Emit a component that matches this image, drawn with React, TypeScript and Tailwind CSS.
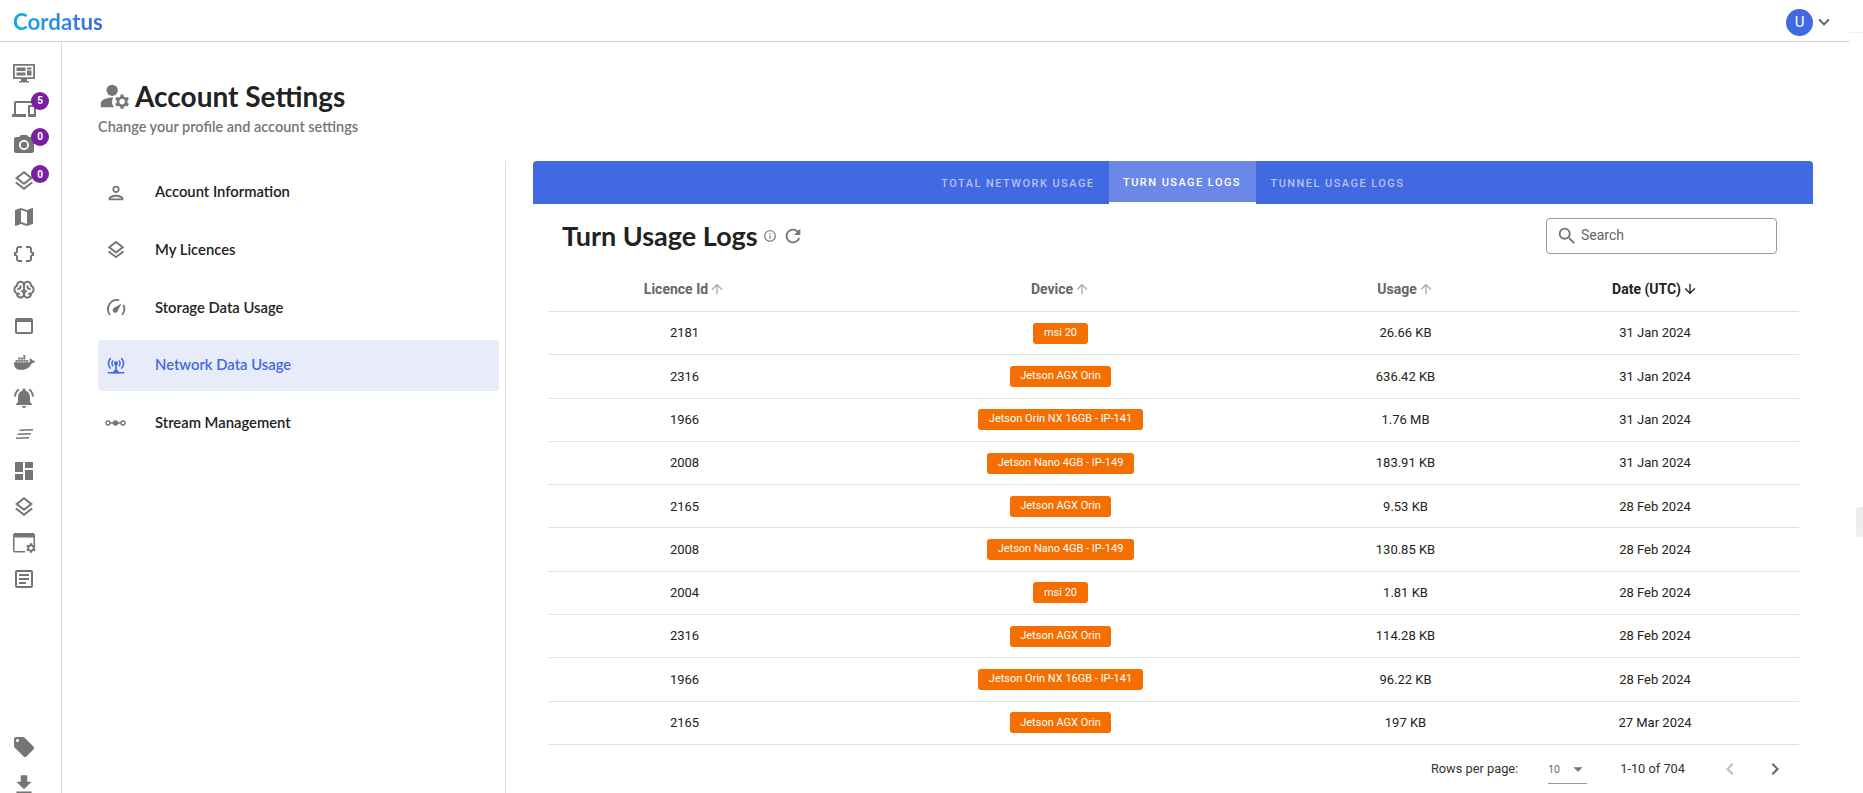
import React from "react";
import {
  MdOutlineDevices, MdPhotoCamera, MdOutlineLayers, MdMap, MdDataObject, MdOutlineWebAsset,
  MdNotificationsActive, MdDashboard, MdOutlineArticle, MdLocalOffer, MdFileDownload, MdManageAccounts,
  MdOutlinePerson, MdArrowUpward, MdArrowDownward, MdSearch, MdInfoOutline, MdRefresh,
  MdArrowDropDown, MdChevronLeft, MdChevronRight, MdExpandMore, MdSettings,
} from "react-icons/md";
import { FaDocker } from "react-icons/fa";
import { PiBrainBold } from "react-icons/pi";

function MonitorIcon() {
  return (
    <svg width="24" height="24" viewBox="0 0 24 24" fill="#757575">
      <path d="M2 3h20a1 1 0 0 1 1 1v13a1 1 0 0 1-1 1h-7v2h2v1.500H7V20h2v-2H2a1 1 0 0 1-1-1V4a1 1 0 0 1 1-1zm.8 1.800v11.400h18.400V4.800H2.800z" />
      <path d="M4.500 6.500h9v3.500h-9zM15 6.500h4.500v2H15zM15 9.500h4.500v5H15zM4.500 11.500h9v3h-9z" />
    </svg>
  );
}

function LinesIcon() {
  return (
    <svg width="24" height="24" viewBox="0 0 24 24" stroke="#757575" strokeWidth="1.6" fill="none">
      <path d="M7.500 8.300L21 7.700M5.500 12.300L19 11.700M4 16.300L17 15.700" />
    </svg>
  );
}

function WindowGearIcon() {
  return (
    <div className="relative w-6 h-6">
      <svg width="24" height="24" viewBox="0 0 24 24" fill="#757575">
        <path d="M3 2h18a2 2 0 0 1 2 2v10h-1.500V6.500h-19V20H13v1.500H3a2 2 0 0 1-2-2V4a2 2 0 0 1 2-2z" />
      </svg>
      <MdSettings size={12} color="#757575" className="absolute right-[-1px] bottom-[1px]" />
    </div>
  );
}

function GaugeIcon() {
  return (
    <svg width="22" height="22" viewBox="0 0 24 24" fill="none" stroke="#757575" strokeWidth="2">
      <path d="M5.500 19.500A10 10 0 0 1 15.500 3.500M20 8.500a10 10 0 0 1-1.500 11" />
      <path d="M9.200 12.300a2.800 2.800 0 0 0 4 4L18 7z" fill="#757575" stroke="none" />
    </svg>
  );
}

function NetworkIcon() {
  return (
    <svg width="20" height="18" viewBox="0 0 24 22" fill="none" stroke="#4169e1" strokeWidth="2">
      <circle cx="12" cy="9" r="1.500" fill="#4169e1" />
      <path d="M8.500 5.500a5 5 0 0 0 0 7M15.500 5.500a5 5 0 0 1 0 7M5.500 2.500a9 9 0 0 0 0 13M18.500 2.500a9 9 0 0 1 0 13M12 10v9M2 20.500h20" />
      <path d="M9 20l3-3 3 3z" fill="#4169e1" />
    </svg>
  );
}

function StreamIcon() {
  return (
    <svg width="21" height="10" viewBox="0 0 21 10" fill="none" stroke="#757575" strokeWidth="1.400">
      <circle cx="3" cy="5" r="2" />
      <circle cx="10.500" cy="5" r="2" fill="#757575" />
      <circle cx="18" cy="5" r="2" />
      <path d="M5 5h3.500M12.500 5H16" />
    </svg>
  );
}

const C = "#757575";

function Badge({ n, top }: { n: string; top: string }) {
  return (
    <span
      className={`absolute left-[31px] ${top} w-[18px] h-[18px] rounded-full bg-[#7b1fa2] text-white text-[10px] font-bold flex items-center justify-center`}
    >
      {n}
    </span>
  );
}

function SideIcon({ children, badge, badgeTop }: { children: React.ReactNode; badge?: string; badgeTop?: string }) {
  return (
    <div className="relative w-[48px] h-[36.2px] flex items-center justify-center">
      {children}
      {badge ? <Badge n={badge} top={badgeTop ?? "top-0"} /> : null}
    </div>
  );
}

function Sidebar() {
  return (
    <aside className="w-[62px] shrink-0 border-r border-[#dcdcdc] pt-[12.500px] overflow-hidden">
      <SideIcon><MonitorIcon /></SideIcon>
      <SideIcon badge="5" badgeTop="top-[1px]"><MdOutlineDevices size={24} color={C} /></SideIcon>
      <SideIcon badge="0" badgeTop="top-[1px]"><MdPhotoCamera size={24} color={C} /></SideIcon>
      <SideIcon badge="0" badgeTop="top-[2px]"><MdOutlineLayers size={24} color={C} /></SideIcon>
      <SideIcon><MdMap size={24} color={C} /></SideIcon>
      <SideIcon><MdDataObject size={24} color={C} /></SideIcon>
      <SideIcon><PiBrainBold size={22} color={C} /></SideIcon>
      <SideIcon><MdOutlineWebAsset size={24} color={C} /></SideIcon>
      <SideIcon><FaDocker size={21} color={C} /></SideIcon>
      <SideIcon><MdNotificationsActive size={24} color={C} /></SideIcon>
      <SideIcon><LinesIcon /></SideIcon>
      <SideIcon><MdDashboard size={24} color={C} /></SideIcon>
      <SideIcon><MdOutlineLayers size={24} color={C} /></SideIcon>
      <SideIcon><WindowGearIcon /></SideIcon>
      <SideIcon><MdOutlineArticle size={24} color={C} /></SideIcon>
      <div className="mt-[130.500px] w-[48px]">
        <div className="h-[38px] flex items-center justify-center"><MdLocalOffer size={24} color={C} /></div>
        <div className="h-[38px] flex items-center justify-center"><MdFileDownload size={26} color={C} /></div>
      </div>
    </aside>
  );
}

const menu: { label: string; icon: React.ReactNode; active?: boolean }[] = [
  { label: "Account Information", icon: <MdOutlinePerson size={22} color={C} /> },
  { label: "My Licences", icon: <MdOutlineLayers size={22} color={C} /> },
  { label: "Storage Data Usage", icon: <GaugeIcon /> },
  { label: "Network Data Usage", icon: <NetworkIcon />, active: true },
  { label: "Stream Management", icon: <StreamIcon /> },
];

function Menu() {
  return (
    <nav className="w-[401px] flex flex-col gap-[6.600px] pt-[6px]">
      {menu.map((m) => (
        <div
          key={m.label}
          className={`h-[51px] flex items-center rounded font-['Lato',sans-serif] font-semibold text-[14.800px] ${
            m.active ? "bg-[#e8ecfa] text-[#4169e1]" : "text-[#222222]"
          }`}
        >
          <div className="w-[35px] mr-[22px] flex justify-center shrink-0">{m.icon}</div>
          <span className="-mt-[2px]">{m.label}</span>
        </div>
      ))}
    </nav>
  );
}

type Row = [string, string, string, string];
const rows: Row[] = [
  ["2181", "msi 20", "26.66 KB", "31 Jan 2024"],
  ["2316", "Jetson AGX Orin", "636.42 KB", "31 Jan 2024"],
  ["1966", "Jetson Orin NX 16GB - IP-141", "1.76 MB", "31 Jan 2024"],
  ["2008", "Jetson Nano 4GB - IP-149", "183.91 KB", "31 Jan 2024"],
  ["2165", "Jetson AGX Orin", "9.53 KB", "28 Feb 2024"],
  ["2008", "Jetson Nano 4GB - IP-149", "130.85 KB", "28 Feb 2024"],
  ["2004", "msi 20", "1.81 KB", "28 Feb 2024"],
  ["2316", "Jetson AGX Orin", "114.28 KB", "28 Feb 2024"],
  ["1966", "Jetson Orin NX 16GB - IP-141", "96.22 KB", "28 Feb 2024"],
  ["2165", "Jetson AGX Orin", "197 KB", "27 Mar 2024"],
];

const grid = "grid grid-cols-[273px_479px_211px_288px]";

function Head({ label, active }: { label: string; active?: boolean }) {
  return (
    <div className={`flex items-center justify-center font-bold text-[14px] ${active ? "text-[#222222]" : "text-[#666666]"}`}>
      {label}
      {active ? (
        <MdArrowDownward size={16} color="#222222" className="ml-[1px]" />
      ) : (
        <MdArrowUpward size={16} color="#aaaaaa" className="ml-[1px]" />
      )}
    </div>
  );
}

function Table() {
  return (
    <div className="mx-[15px] w-[1251px]">
      <div className={`${grid} h-[45px] border-b border-[#e0e0e0]`}>
        <Head label="Licence Id" />
        <Head label="Device" />
        <Head label="Usage" />
        <Head label="Date (UTC)" active />
      </div>
      {rows.map((r, i) => (
        <div key={i} className={`${grid} h-[43.300px] border-b border-[#e0e0e0] text-[13px] text-[#222222] items-center text-center`}>
          <div>{r[0]}</div>
          <div className="flex justify-center">
            <span className="h-[21px] px-[10.500px] rounded-[3px] bg-[#f46e00] text-white text-[11px] flex items-center">{r[1]}</span>
          </div>
          <div>{r[2]}</div>
          <div>{r[3]}</div>
        </div>
      ))}
      <div className="h-[48px] flex items-center justify-end text-[12.800px] text-[#333333]">
        <span>Rows per page:</span>
        <div className="relative ml-[30px] w-[39px] h-[31px] border-b border-[#999999] flex items-center text-[10.500px] text-[#666666] pt-[3px]">
          10
          <MdArrowDropDown size={22} color="#757575" className="absolute left-[19px] top-[5px]" />
        </div>
        <span className="ml-[33px]">1-10 of 704</span>
        <MdChevronLeft size={24} color="#bdbdbd" className="ml-[33px]" />
        <MdChevronRight size={24} color="#666666" className="ml-[21px] mr-[12px]" />
      </div>
    </div>
  );
}

function Tabs() {
  return (
    <div className="h-[43px] bg-[#4169e1] rounded-t flex justify-center pr-[2px] text-[11px] font-medium tracking-[1.450px]">
      <div className="w-[182px] pt-[3px] flex items-center justify-end pr-[14px] text-white/60">TOTAL NETWORK USAGE</div>
      <div className="w-[147px] h-full pt-[3px] flex items-center justify-center bg-[#6c88e7] border-b-2 border-white text-white">TURN USAGE LOGS</div>
      <div className="w-[162px] pt-[3px] flex items-center pl-[15px] text-white/60">TUNNEL USAGE LOGS</div>
    </div>
  );
}

export default function App() {
  return (
    <div className="relative w-[1863px] h-[793px] overflow-hidden bg-white font-['Roboto',sans-serif] flex flex-col">
      <header className="w-[1849px] h-[42px] shrink-0 border-b border-[#cccccc] flex items-center justify-between pl-[13px] pt-[3px]">
        <span className="font-['Lato',sans-serif] font-bold text-[22.300px] bg-gradient-to-r from-[#06aede] to-[#4065e0] bg-clip-text text-transparent">
          Cordatus
        </span>
        <div className="flex items-center mr-[14px]">
          <div className="w-[27px] h-[27px] rounded-full bg-[#4169e1] text-white text-[15px] flex items-center justify-center">U</div>
          <MdExpandMore size={22} color="#666666" />
        </div>
      </header>
      <div className="flex flex-1 min-h-0">
        <Sidebar />
        <main className="flex-1 min-w-0 pl-[36px]">
          <div className="h-[119px] pt-[37px] font-['Lato',sans-serif]">
            <div className="flex items-center h-[34px] -mb-px">
              <MdManageAccounts size={34} color={C} />
              <h1 className="ml-[3px] font-bold text-[28px] text-[#222222]">Account Settings</h1>
            </div>
            <p className="mt-[4px] font-semibold text-[14.500px] text-[#757575]">Change your profile and account settings</p>
          </div>
          <div className="flex h-[632px]">
            <Menu />
            <div className="w-[1px] ml-[6px] bg-[#dcdcdc]" />
            <section className="ml-[27px] w-[1280px]">
              <Tabs />
              <div className="mt-[14px] mb-[13px] h-[36px] flex items-center justify-between pl-[29px] pr-[36px]">
                <div className="flex items-center">
                  <h2 className="font-['Lato',sans-serif] font-bold text-[27px] text-[#222222]">Turn Usage Logs</h2>
                  <MdInfoOutline size={14} color={C} className="ml-[5px]" />
                  <MdRefresh size={22} color={C} className="ml-[5px]" />
                </div>
                <div className="w-[231px] h-[36px] rounded border border-[#999999] flex items-center pl-[9px] pb-[1px] text-[14px] text-[#666666]">
                  <MdSearch size={22} color={C} />
                  <span className="ml-[3px]">Search</span>
                </div>
              </div>
              <Table />
            </section>
          </div>
        </main>
      </div>
      <div className="absolute right-0 top-[32px] w-[14px] h-px bg-[#eeeeee]" />
      <div className="absolute right-0 top-[507px] w-[7px] h-[30px] bg-[#eeeeee] rounded-l" />
    </div>
  );
}
